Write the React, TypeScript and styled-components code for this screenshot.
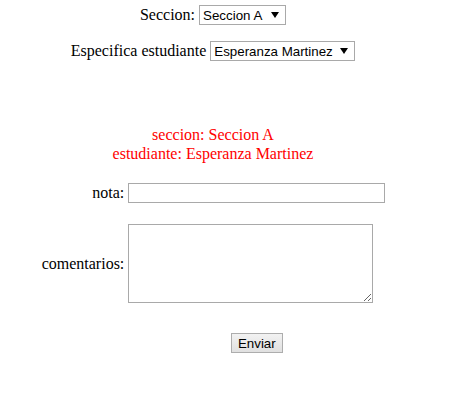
import React from "react";
import styled, { createGlobalStyle } from "styled-components";

const GlobalStyle = createGlobalStyle`
    html, body {
        margin: 0;
        padding: 0;
        background: #ffffff;
    }
    body {
        font-family: "Liberation Serif", "Times New Roman", serif;
        font-size: 16px;
        color: #000000;
    }
`;

const Page = styled.div`
    width: 426px;
    padding-top: 5px;
    display: flex;
    flex-flow: column nowrap;
    align-items: center;
`;

const FilterRow = styled.div<{ $gap: number }>`
    display: flex;
    align-items: center;
    gap: 4px;
    margin-bottom: ${(p) => p.$gap}px;
`;

const SelectWrap = styled.span`
    position: relative;
    display: inline-block;
`;

const Select = styled.select`
    appearance: none;
    -webkit-appearance: none;
    font-family: "Liberation Sans", Arial, sans-serif;
    font-size: 13.33px;
    color: #000000;
    height: 20px;
    padding: 0 21px 0 3px;
    border: 1px solid #a9a9a9;
    border-radius: 0;
    background: #ffffff;
`;

const Arrow = styled.span`
    position: absolute;
    right: 7px;
    top: 7px;
    width: 0;
    height: 0;
    border-left: 4px solid transparent;
    border-right: 4px solid transparent;
    border-top: 6px solid #000000;
    pointer-events: none;
`;

const Summary = styled.div`
    color: #ff0000;
    text-align: center;
    line-height: 19px;
    margin-bottom: 20px;
`;

const FormGrid = styled.div`
    display: grid;
    grid-template-columns: auto 259px;
    column-gap: 3px;
    row-gap: 21px;
    align-items: center;
    margin-left: 2px;
`;

const Label = styled.label`
    text-align: right;
`;

const Field = styled.div<{ $center?: boolean }>`
    padding: 0 1px;
    text-align: ${(p) => (p.$center ? "center" : "left")};
    margin-top: ${(p) => (p.$center ? "9px" : "0")};
`;

const TextInput = styled.input`
    box-sizing: border-box;
    width: 257px;
    height: 20px;
    border: 1px solid #a9a9a9;
    padding: 1px 2px;
    font-family: "Liberation Sans", Arial, sans-serif;
    font-size: 13.33px;
    display: block;
`;

const TextArea = styled.textarea`
    box-sizing: border-box;
    width: 245px;
    height: 79px;
    border: 1px solid #a9a9a9;
    display: block;
    font-family: "Liberation Mono", monospace;
    font-size: 13.33px;
`;

const SubmitButton = styled.button`
    font-family: "Liberation Sans", Arial, sans-serif;
    font-size: 13.33px;
    color: #000000;
    height: 20px;
    padding: 0 6px;
    border: 1px solid #adadad;
    border-radius: 0;
    background: linear-gradient(#f2f2f2, #e0e0e0);
`;

const Spacer = styled.span``;

export default function App() {
    return (
        <>
            <GlobalStyle />
            <Page>
                <FilterRow $gap={16}>
                    <span>Seccion:</span>
                    <SelectWrap>
                        <Select defaultValue="A">
                            <option value="A">Seccion A</option>
                            <option value="B">Seccion B</option>
                        </Select>
                        <Arrow />
                    </SelectWrap>
                </FilterRow>
                <FilterRow $gap={64}>
                    <span>Especifica estudiante</span>
                    <SelectWrap>
                        <Select defaultValue="esperanza">
                            <option value="esperanza">Esperanza Martinez</option>
                        </Select>
                        <Arrow />
                    </SelectWrap>
                </FilterRow>
                <Summary>
                    seccion: Seccion A
                    <br />
                    estudiante: Esperanza Martinez
                </Summary>
                <FormGrid>
                    <Label htmlFor="nota">nota:</Label>
                    <Field>
                        <TextInput id="nota" type="text" />
                    </Field>
                    <Label htmlFor="comentarios">comentarios:</Label>
                    <Field>
                        <TextArea id="comentarios" />
                    </Field>
                    <Spacer />
                    <Field $center>
                        <SubmitButton type="submit">Enviar</SubmitButton>
                    </Field>
                </FormGrid>
            </Page>
        </>
    );
}
